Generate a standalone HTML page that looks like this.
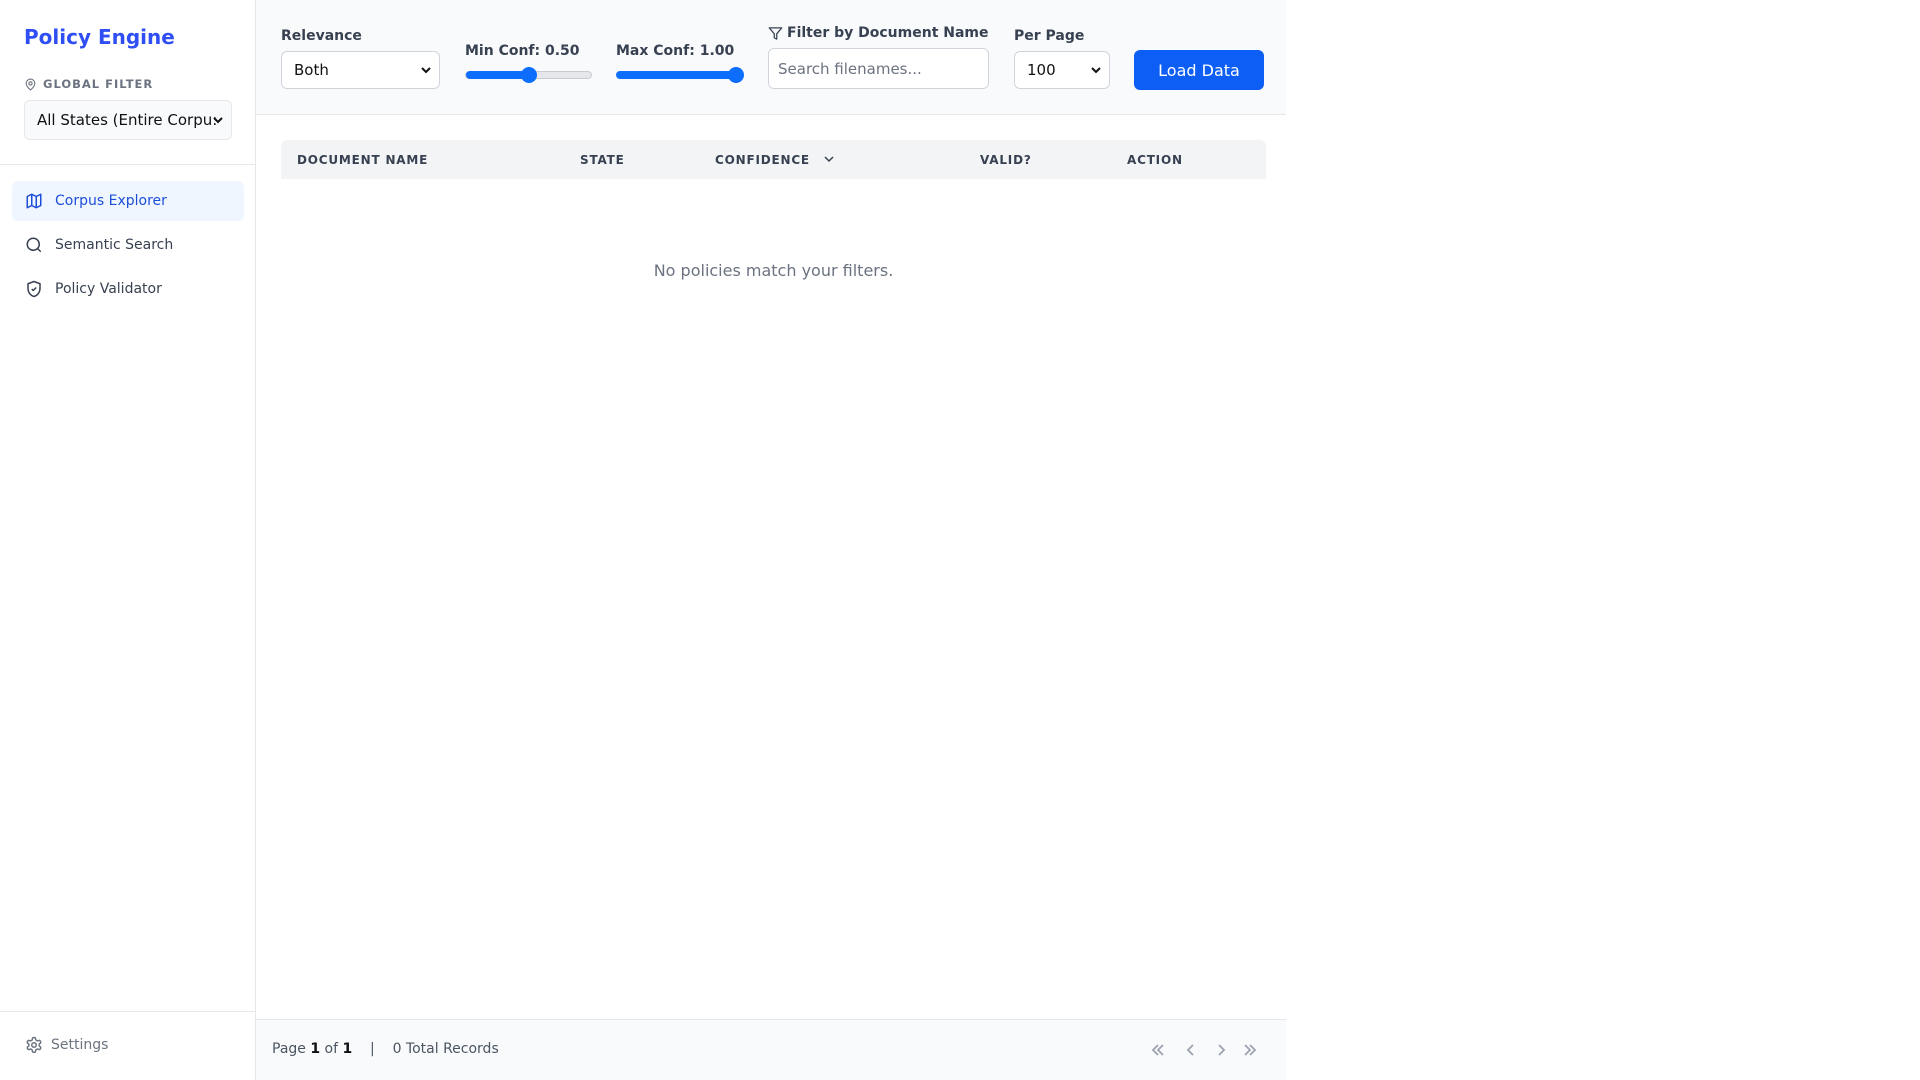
<!DOCTYPE html>
<html><head><meta charset="utf-8"><style>
*{box-sizing:border-box;margin:0;padding:0}
body{width:1920px;height:1080px;background:#fff;font-family:"DejaVu Sans","Liberation Sans",sans-serif;color:#374151;position:relative;overflow:hidden}
.side{position:absolute;left:0;top:0;width:256px;height:1080px;border-right:1px solid #e5e7eb;background:#fff}
.title{position:absolute;left:24px;top:25px;font-size:20px;font-weight:bold;color:#2f4ff5}
.gf{position:absolute;left:24px;top:77px;font-size:11.5px;font-weight:bold;color:#6b7280;letter-spacing:1px;display:flex;align-items:center;gap:6px}
.sel{position:absolute;border:1px solid #d1d5db;border-radius:6px;background:#fff;font-size:15px;color:#111;display:flex;align-items:center;padding-left:12px}
.sel svg{position:absolute;right:8px;top:50%;margin-top:-4px}
.div{position:absolute;left:0;width:255px;height:1px;background:#e5e7eb}
.nav{position:absolute;left:12px;width:232px;height:40px;border-radius:6px;display:flex;align-items:center;padding-left:13px;gap:12px;font-size:14px;color:#374151}
.main{position:absolute;left:256px;top:0;width:1030px;height:1080px}
.hdr{position:absolute;left:0;top:0;width:1030px;height:115px;background:#f9fafb;border-bottom:1px solid #e5e7eb}
.lbl{position:absolute;font-size:14px;font-weight:bold;color:#374151;white-space:nowrap}
.track{position:absolute;height:8px;border-radius:4px;background:#e5e7eb;border:1px solid #c9cdd3}
.fill{position:absolute;left:0;top:-1px;height:8px;border-radius:4px;background:#0d6efd}
.thumb{position:absolute;top:-5px;width:16px;height:16px;border-radius:50%;background:#0d6efd}
.th{position:absolute;top:140px;left:25px;width:985px;height:39px;background:#f3f4f6;border-radius:6px 6px 0 0}
.th span{position:absolute;top:13px;font-size:12px;font-weight:bold;letter-spacing:.8px;color:#374151}
.foot{position:absolute;left:0;top:1019px;width:1030px;height:61px;background:#f9fafb;border-top:1px solid #e5e7eb}
</style></head><body>
<div class="side">
<div class="title">Policy Engine</div>
<div class="gf"><svg width="13" height="13" viewBox="0 0 24 24" fill="none" stroke="#6b7280" stroke-width="2"><path d="M20 10c0 6-8 12-8 12s-8-6-8-12a8 8 0 0 1 16 0z"/><circle cx="12" cy="10" r="3"/></svg>GLOBAL FILTER</div>
<div class="sel" style="left:24px;top:100px;width:208px;height:40px;background:#f9fafb;border-color:#e5e7eb">All States (Entire Corpu:<svg width="10" height="8" viewBox="0 0 10 8"><path d="M1 2l4 4 4-4" stroke="#111" stroke-width="2" fill="none"/></svg></div>
<div class="div" style="top:164px"></div>
<div class="nav" style="top:181px;background:#eff6ff;color:#1d4ed8"><svg width="18" height="18" viewBox="0 0 24 24" fill="none" stroke="#1d4ed8" stroke-width="2" stroke-linejoin="round"><path d="M3 6l6-3 6 3 6-3v15l-6 3-6-3-6 3z"/><path d="M9 3v15M15 6v15"/></svg>Corpus Explorer</div>
<div class="nav" style="top:225px"><svg width="18" height="18" viewBox="0 0 24 24" fill="none" stroke="#374151" stroke-width="2"><circle cx="11" cy="11" r="8"/><path d="M21 21l-4.3-4.3"/></svg>Semantic Search</div>
<div class="nav" style="top:269px"><svg width="18" height="18" viewBox="0 0 24 24" fill="none" stroke="#374151" stroke-width="2" stroke-linejoin="round"><path d="M12 2l8 3v6c0 6-4 10-8 11-4-1-8-5-8-11V5z"/><path d="M9 12l2 2 4-4"/></svg>Policy Validator</div>
<div class="div" style="top:1011px"></div>
<div style="position:absolute;left:25px;top:1036px;display:flex;align-items:center;gap:8px;font-size:14px;color:#6b7280"><svg width="18" height="18" viewBox="0 0 24 24" fill="none" stroke="#6b7280" stroke-width="2"><circle cx="12" cy="12" r="3"/><path d="M12.2 2h-.4a2 2 0 0 0-2 2v.2a2 2 0 0 1-1 1.7l-.4.3a2 2 0 0 1-2 0l-.2-.1a2 2 0 0 0-2.7.7l-.2.4a2 2 0 0 0 .7 2.7l.2.1a2 2 0 0 1 1 1.7v.5a2 2 0 0 1-1 1.7l-.2.1a2 2 0 0 0-.7 2.7l.2.4a2 2 0 0 0 2.7.7l.2-.1a2 2 0 0 1 2 0l.4.3a2 2 0 0 1 1 1.7v.2a2 2 0 0 0 2 2h.4a2 2 0 0 0 2-2v-.2a2 2 0 0 1 1-1.7l.4-.3a2 2 0 0 1 2 0l.2.1a2 2 0 0 0 2.7-.7l.2-.4a2 2 0 0 0-.7-2.7l-.2-.1a2 2 0 0 1-1-1.7v-.5a2 2 0 0 1 1-1.7l.2-.1a2 2 0 0 0 .7-2.7l-.2-.4a2 2 0 0 0-2.7-.7l-.2.1a2 2 0 0 1-2 0l-.4-.3a2 2 0 0 1-1-1.7V4a2 2 0 0 0-2-2z"/></svg>Settings</div>
</div>
<div class="main">
<div class="hdr">
<div class="lbl" style="left:25px;top:28px">Relevance</div>
<div class="sel" style="left:25px;top:51px;width:159px;height:38px">Both<svg width="10" height="8" viewBox="0 0 10 8"><path d="M1 2l4 4 4-4" stroke="#111" stroke-width="2" fill="none"/></svg></div>
<div class="lbl" style="left:209px;top:43px">Min Conf: 0.50</div>
<div class="track" style="left:209px;top:71px;width:127px"><div class="fill" style="width:64px"></div><div class="thumb" style="left:55px"></div></div>
<div class="lbl" style="left:360px;top:43px">Max Conf: 1.00</div>
<div class="track" style="left:360px;top:71px;width:127px;border-color:#0d6efd"><div class="fill" style="width:125px"></div><div class="thumb" style="left:111px"></div></div>
<div class="lbl" style="left:512px;top:25px;display:flex;align-items:center;gap:4px"><svg width="15" height="15" viewBox="0 0 24 24" fill="none" stroke="#374151" stroke-width="2" stroke-linejoin="round"><path d="M22 3H2l8 9.5V19l4 2v-8.5z"/></svg>Filter by Document Name</div>
<div class="sel" style="left:512px;top:48px;width:221px;height:41px;color:#6b7280;padding-left:9px">Search filenames...</div>
<div class="lbl" style="left:758px;top:28px">Per Page</div>
<div class="sel" style="left:758px;top:51px;width:96px;height:38px">100<svg width="10" height="8" viewBox="0 0 10 8"><path d="M1 2l4 4 4-4" stroke="#111" stroke-width="2" fill="none"/></svg></div>
<div style="position:absolute;left:878px;top:50px;width:130px;height:40px;background:#0d5ef5;border-radius:6px;color:#fff;font-size:16px;display:flex;align-items:center;justify-content:center">Load Data</div>
</div>
<div class="th"><span style="left:16px">DOCUMENT NAME</span><span style="left:299px">STATE</span><span style="left:434px">CONFIDENCE <svg width="12" height="10" viewBox="0 0 12 10" style="margin-left:8px"><path d="M2 3l4 4 4-4" stroke="#374151" stroke-width="1.5" fill="none"/></svg></span><span style="left:699px">VALID?</span><span style="left:846px">ACTION</span></div>
<div style="position:absolute;left:25px;width:985px;top:261px;text-align:center;font-size:16px;color:#6b7280">No policies match your filters.</div>
<div class="foot">
<div style="position:absolute;left:16px;top:21px;font-size:14px;color:#4b5563">Page <b style="color:#111">1</b> of <b style="color:#111">1</b> &nbsp;&nbsp;&nbsp;|&nbsp;&nbsp;&nbsp; 0 Total Records</div>
<svg style="position:absolute;left:891px;top:21px" width="130" height="18" viewBox="0 0 130 18" fill="none" stroke="#9ca3af" stroke-width="1.8"><path d="M11 4l-5 5 5 5M16 4l-5 5 5 5M46 4l-5 5 5 5M72 4l5 5-5 5M98 4l5 5-5 5M103 4l5 5-5 5"/></svg>
</div>
</div>
</body></html>
